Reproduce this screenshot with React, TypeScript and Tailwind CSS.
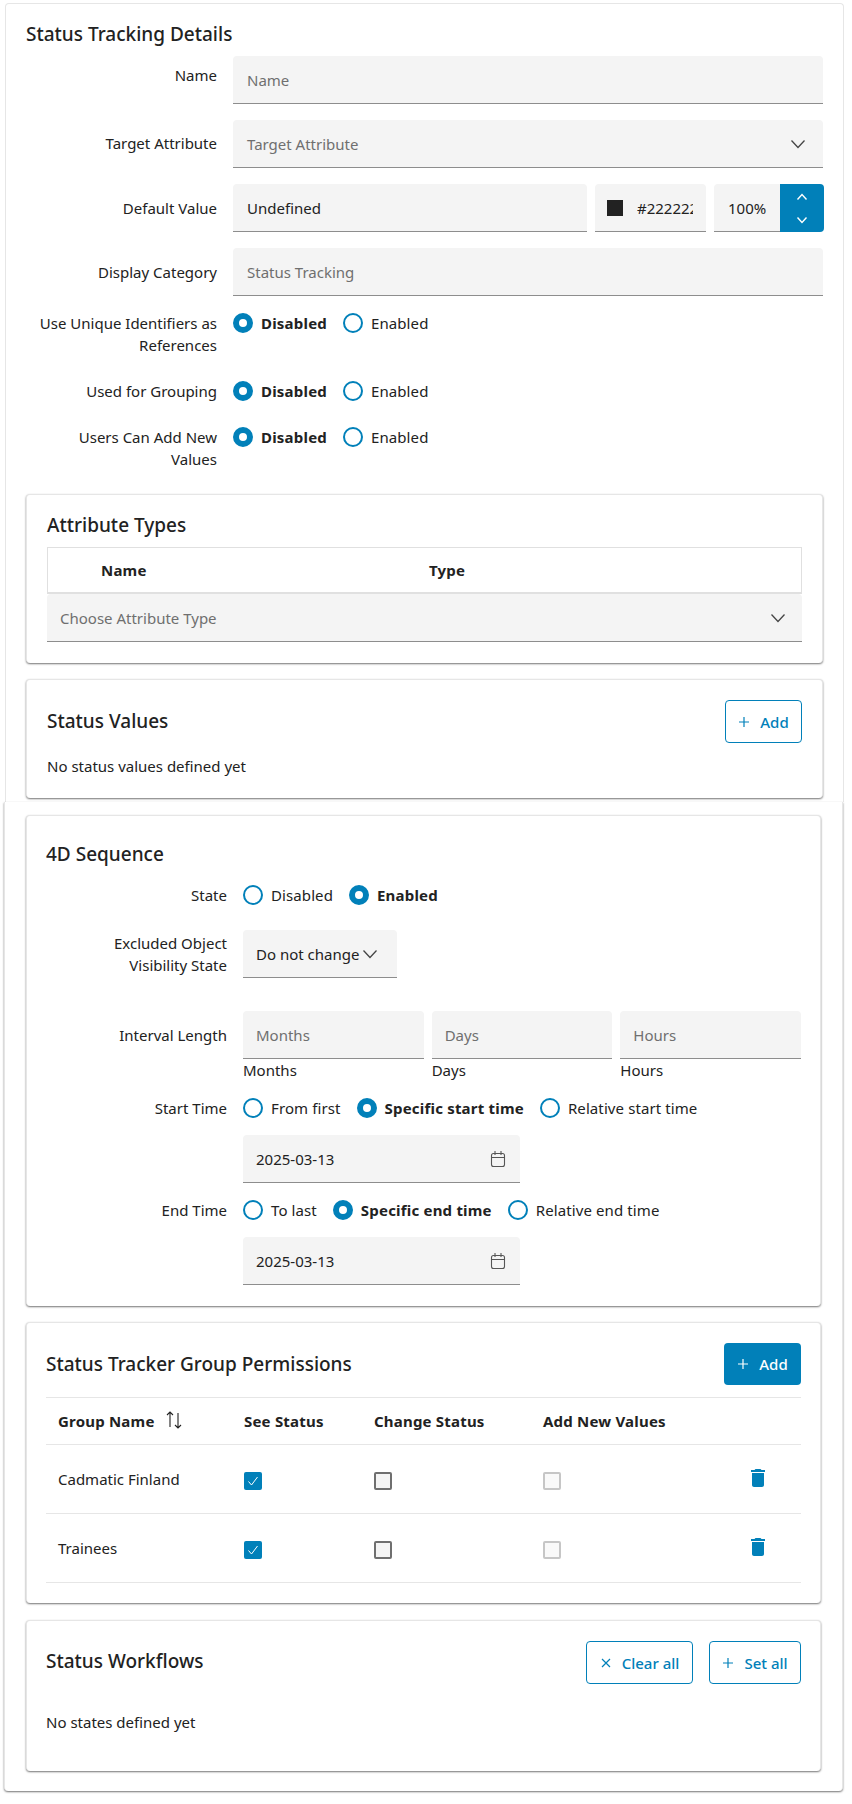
import React from "react";

function Chevron({ className = "" }: { className?: string }) {
  return (
    <svg width="16" height="16" viewBox="0 0 16 16" fill="none" stroke="currentColor" strokeWidth="1.3" className={`shrink-0 ${className}`}>
      <path d="M1.5 4.5 8 11.5l6.5-7" />
    </svg>
  );
}

function Calendar() {
  return (
    <svg width="16" height="18" viewBox="0 0 16 18" fill="none" stroke="#555" strokeWidth="1.1" className="shrink-0">
      <rect x="1.5" y="3.5" width="13" height="13" rx="2" />
      <path d="M1.5 7.5h13M5 1v4M11 1v4" />
    </svg>
  );
}

function Plus() {
  return (
    <svg width="12" height="12" viewBox="0 0 12 12" fill="none" stroke="currentColor" strokeWidth="1.2" className="shrink-0">
      <path d="M6 1v10M1 6h10" />
    </svg>
  );
}

function Times() {
  return (
    <svg width="12" height="12" viewBox="0 0 12 12" fill="none" stroke="currentColor" strokeWidth="1.2" className="shrink-0">
      <path d="M2 2l8 8M10 2l-8 8" />
    </svg>
  );
}

function Trash() {
  return (
    <svg width="24" height="24" viewBox="0 0 24 24" fill="#0180b9" className="-mt-[2px]">
      <path d="M6 19c0 1.1.9 2 2 2h8c1.1 0 2-.9 2-2V7H6v12zM19 4h-3.5l-1-1h-5l-1 1H5v2h14V4z" />
    </svg>
  );
}

function SortIcon() {
  return (
    <svg width="18" height="18" viewBox="0 0 18 18" fill="none" stroke="#222" strokeWidth="1.1" className="shrink-0 -mt-[3px]">
      <path d="M5 16V1M2 4l3-3 3 3M13 2v15M10 14l3 3 3-3" />
    </svg>
  );
}

function Field({ className = "", children }: { className?: string; children: React.ReactNode }) {
  return (
    <div className={`h-[48px] flex items-center bg-[#f4f4f4] border-b border-[#8d8d8d] rounded-t-[4px] px-[14px] ${className}`}>
      {children}
    </div>
  );
}

function Radio({ on, label }: { on?: boolean; label: string }) {
  return (
    <div className="flex items-center gap-[8px] whitespace-nowrap">
      <span className={`w-[20px] h-[20px] rounded-full shrink-0 bg-white border-[#0180b9] ${on ? "border-[6px]" : "border-2"}`} />
      <span className={on ? "font-bold tracking-[0.2px]" : "tracking-[0.1px]"}>{label}</span>
    </div>
  );
}

function Radios({ items }: { items: [string, boolean][] }) {
  return (
    <div className="flex items-center gap-[16px] h-[22px]">
      {items.map(([l, on]) => (
        <Radio key={l} label={l} on={on} />
      ))}
    </div>
  );
}

function Row({ label, children }: { label: React.ReactNode; children: React.ReactNode }) {
  return (
    <div className="flex items-center gap-[16px] mb-[16px]">
      <div className="w-[191px] shrink-0 text-right">{label}</div>
      <div className="flex-1 min-w-0 flex gap-[8px]">{children}</div>
    </div>
  );
}

function RadioRow({ label, items, className = "mb-[24px]" }: { label: React.ReactNode; items: [string, boolean][]; className?: string }) {
  return (
    <div className={`flex items-start gap-[16px] ${className}`}>
      <div className="w-[191px] shrink-0 text-right">{label}</div>
      <Radios items={items} />
    </div>
  );
}

function Card({ className = "", children }: { className?: string; children: React.ReactNode }) {
  return (
    <div className={`bg-white border border-[#e6e6e6] border-b-0 rounded-[4px] shadow-[0_1px_2px_rgba(0,0,0,0.55)] ${className}`}>
      {children}
    </div>
  );
}

function Outline({ icon, label, className = "" }: { icon: React.ReactNode; label: string; className?: string }) {
  return (
    <button className={`h-[43px] flex items-center justify-center gap-[10px] rounded-[4px] border border-[#0180b9] text-[#0180b9] font-medium ${className}`}>
      {icon}
      {label}
    </button>
  );
}

function S4Row({ label, children, className = "" }: { label: React.ReactNode; children: React.ReactNode; className?: string }) {
  return (
    <div className={`flex gap-[16px] ${className}`}>
      <div className="w-[181px] shrink-0 text-right">{label}</div>
      <div className="flex-1 min-w-0">{children}</div>
    </div>
  );
}

function Check({ state }: { state: "on" | "off" | "disabled" }) {
  if (state === "on")
    return (
      <span className="mt-[3px] w-[18px] h-[18px] rounded-[2px] bg-[#0180b9] flex items-center justify-center">
        <svg width="12" height="12" viewBox="0 0 12 12" fill="none" stroke="#fff" strokeWidth="1">
          <path d="M1.5 6.5l3 3.5 6-8" />
        </svg>
      </span>
    );
  if (state === "off") return <span className="mt-[3px] block w-[18px] h-[18px] rounded-[2px] border-2 border-[#6f6f6f] bg-[#f4f4f4]" />;
  return <span className="mt-[3px] block w-[18px] h-[18px] rounded-[2px] border-2 border-[#c6c6c6] bg-[#f9f9f9]" />;
}

function PermRow({ name }: { name: string }) {
  return (
    <div className="grid grid-cols-[186px_130px_169px_203px_1fr] h-[69px] border-b border-[#e6e6e6] items-center pl-[12px]">
      <span>{name}</span>
      <Check state="on" />
      <Check state="off" />
      <Check state="disabled" />
      <Trash />
    </div>
  );
}

export default function App() {
  return (
    <div className="min-h-[1804px] bg-white pt-[3px] text-[15px] leading-[22px] text-[#222222] font-['Noto_Sans',sans-serif]">
      <div className="ml-[5px] w-[839px] bg-white border border-[#e6e6e6] border-b-0 rounded-t-[4px] px-[20px] pb-[4px]">
        <h2 className="text-[19px] leading-[24px] font-medium pt-[18px] pb-[10px]">Status Tracking Details</h2>

        <div className="flex gap-[16px] mb-[16px]">
          <div className="w-[191px] shrink-0 text-right pt-[8px]">Name</div>
          <Field className="flex-1 text-[#6f6f6f]">Name</Field>
        </div>
        <Row label={<span className="block -mt-[2px]">Target Attribute</span>}>
          <Field className="flex-1 justify-between text-[#6f6f6f] pr-[17px]">
            Target Attribute
            <Chevron className="text-[#444]" />
          </Field>
        </Row>
        <Row label="Default Value">
          <Field className="w-[354px] shrink-0">Undefined</Field>
          <Field className="w-[111px] shrink-0 pl-[12px] pr-[13px] gap-[14px] overflow-hidden">
            <span className="w-[16px] h-[16px] bg-[#222222] shrink-0" />
            <span className="overflow-hidden whitespace-nowrap">#222222</span>
          </Field>
          <div className="flex-1 flex h-[48px]">
            <Field className="flex-1 rounded-tr-none">100%</Field>
            <div className="w-[44px] bg-[#0180b9] rounded-r-[4px] flex flex-col items-center justify-center gap-[9px] text-white">
              <svg width="12" height="14" viewBox="0 0 12 14" fill="none" stroke="currentColor" strokeWidth="1.4"><path d="M1.5 9.5 6 4.5l4.5 5" /></svg>
              <svg width="12" height="14" viewBox="0 0 12 14" fill="none" stroke="currentColor" strokeWidth="1.4"><path d="M1.5 4.5 6 9.5l4.5-5" /></svg>
            </div>
          </div>
        </Row>
        <Row label="Display Category">
          <Field className="flex-1 text-[#6f6f6f]">Status Tracking</Field>
        </Row>

        <RadioRow label={<>Use Unique Identifiers as<br />References</>} items={[["Disabled", true], ["Enabled", false]]} />
        <RadioRow label="Used for Grouping" items={[["Disabled", true], ["Enabled", false]]} />
        <RadioRow label={<>Users Can Add New<br />Values</>} items={[["Disabled", true], ["Enabled", false]]} />

        <Card className="h-[169px] px-[20px] pt-[18px] mb-[16px]">
          <h3 className="text-[19px] leading-[24px] font-medium mb-[10px]">Attribute Types</h3>
          <div className="border border-[#e0e0e0] border-b-2 h-[47px] grid grid-cols-[328px_1fr] items-center pl-[53px] font-bold tracking-[0.2px]">
            <span>Name</span>
            <span>Type</span>
          </div>
          <Field className="h-[47px] justify-between text-[#6f6f6f] rounded-none pl-[13px] pr-[16px]">
            Choose Attribute Type
            <Chevron className="text-[#444]" />
          </Field>
        </Card>

        <Card className="h-[119px] px-[20px] pt-[20px]">
          <div className="flex items-center justify-between h-[43px]">
            <h3 className="text-[19px] leading-[24px] font-medium -mt-[2px]">Status Values</h3>
            <Outline icon={<Plus />} label="Add" className="w-[77px]" />
          </div>
          <p className="mt-[12px]">No status values defined yet</p>
        </Card>
      </div>

      <div className="ml-[4px] w-[839px] bg-white border-x border-[#e6e6e6] rounded-b-[4px] shadow-[0_1px_2px_rgba(0,0,0,0.55)] px-[21px] pt-[13px] pb-[20px]">
        <Card className="h-[491px] px-[19px] pt-[26px] mb-[16px]">
          <h3 className="text-[19px] leading-[24px] font-medium mb-[18px]">4D Sequence</h3>
          <S4Row label="State" className="mb-[24px]">
            <Radios items={[["Disabled", false], ["Enabled", true]]} />
          </S4Row>
          <S4Row label={<>Excluded Object<br />Visibility State</>} className="mb-[33px] items-center">
            <Field className="w-[154px] gap-[3px] pl-[13px] pr-0 whitespace-nowrap">
              Do not change
              <Chevron className="text-[#444]" />
            </Field>
          </S4Row>
          <S4Row label={<span className="block pt-[13px]">Interval Length</span>} className="mb-[16px]">
            <div className="grid grid-cols-3 gap-[8px]">
              {["Months", "Days", "Hours"].map((t) => (
                <div key={t}>
                  <Field className="text-[#6f6f6f] pl-[13px]">{t}</Field>
                  <div>{t}</div>
                </div>
              ))}
            </div>
          </S4Row>
          <S4Row label="Start Time" className="mb-[16px]">
            <Radios items={[["From first", false], ["Specific start time", true], ["Relative start time", false]]} />
            <Field className="w-[277px] mt-[16px] justify-between pl-[13px] pr-[14px]">
              2025-03-13
              <Calendar />
            </Field>
          </S4Row>
          <S4Row label="End Time">
            <Radios items={[["To last", false], ["Specific end time", true], ["Relative end time", false]]} />
            <Field className="w-[277px] mt-[16px] justify-between pl-[13px] pr-[14px]">
              2025-03-13
              <Calendar />
            </Field>
          </S4Row>
        </Card>

        <Card className="h-[281px] px-[19px] pt-[20px] mb-[17px]">
          <div className="flex items-center justify-between h-[42px] mb-[12px]">
            <h3 className="text-[19px] leading-[24px] font-medium">Status Tracker Group Permissions</h3>
            <button className="h-[42px] w-[77px] flex items-center justify-center gap-[10px] rounded-[4px] bg-[#0180b9] text-white font-medium">
              <Plus />
              Add
            </button>
          </div>
          <div className="grid grid-cols-[186px_130px_169px_203px_1fr] h-[48px] border-y border-[#e6e6e6] items-center pl-[12px] font-bold tracking-[0.2px]">
            <span className="flex items-center gap-[10px]">
              Group Name
              <SortIcon />
            </span>
            <span>See Status</span>
            <span>Change Status</span>
            <span>Add New Values</span>
          </div>
          <PermRow name="Cadmatic Finland" />
          <PermRow name="Trainees" />
        </Card>

        <Card className="h-[151px] px-[19px] pt-[20px]">
          <div className="flex items-center justify-between h-[43px]">
            <h3 className="text-[19px] leading-[24px] font-medium -mt-[3px]">Status Workflows</h3>
            <div className="flex gap-[16px]">
              <Outline icon={<Times />} label="Clear all" className="w-[107px]" />
              <Outline icon={<Plus />} label="Set all" className="w-[92px]" />
            </div>
          </div>
          <p className="mt-[27px]">No states defined yet</p>
        </Card>
      </div>
    </div>
  );
}
